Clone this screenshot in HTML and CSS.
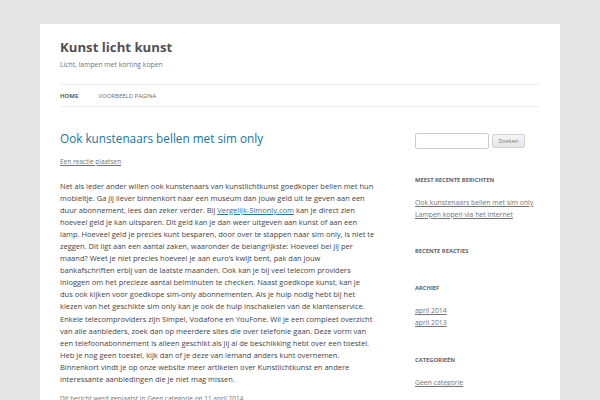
FILE: index.html
```html
<!DOCTYPE html>
<html lang="nl">
<head>
    <meta charset="UTF-8">
    <title>Kunst licht kunst</title>
    <link rel="stylesheet" href="styles.css">
</head>
<body>
    <div id="page" class="site">
        <header class="site-header">
            <h1 class="site-title">Kunst licht kunst</h1>
            <h2 class="site-description">Licht, lampen met korting kopen</h2>
            <nav class="main-navigation">
                <a class="current" href="#">Home</a>
                <a href="#">Voorbeeld pagina</a>
            </nav>
        </header>

        <div class="site-content">
            <main class="content">
                <article class="post">
                    <h1 class="entry-title"><a href="#">Ook kunstenaars bellen met sim only</a></h1>
                    <div class="comments-link"><a href="#">Een reactie plaatsen</a></div>
                    <p class="entry-content">Net als ieder ander willen ook kunstenaars van kunstlichtkunst goedkoper bellen met hun mobieltje. Ga jij liever binnenkort naar een museum dan jouw geld uit te geven aan een duur abonnement, lees dan zeker verder. Bij <a href="#">Vergelijk-Simonly.com</a> kan je direct zien hoeveel geld je kan uitsparen. Dit geld kan je dan weer uitgeven aan kunst of aan een lamp. Hoeveel geld je precies kunt besparen, door over te stappen naar sim only, is niet te zeggen. Dit ligt aan een aantal zaken, waaronder de belangrijkste: Hoeveel bel jij per maand? Weet je niet precies hoeveel je aan euro’s kwijt bent, pak dan jouw bankafschriften erbij van de laatste maanden. Ook kan je bij veel telecom providers inloggen om het precieze aantal belminuten te checken. Naast goedkope kunst, kan je dus ook kijken voor goedkope sim-only abonnementen. Als je hulp nodig hebt bij het kiezen van het geschikte sim only kan je ook de hulp inschakelen van de klantenservice. Enkele telecomproviders zijn Simpel, Vodafone en YouFone. Wil je een compleet overzicht van alle aanbieders, zoek dan op meerdere sites die over telefonie gaan. Deze vorm van een telefoonabonnement is alleen geschikt als jij al de beschikking hebt over een toestel. Heb je nog geen toestel, kijk dan of je deze van iemand anders kunt overnemen.<br>Binnenkort vindt je op onze website meer artikelen over Kunstlichtkunst en andere interessante aanbiedingen die je niet mag missen.</p>
                    <footer class="entry-meta">Dit bericht werd geplaatst in <a href="#">Geen categorie</a> op <a href="#">11 april 2014</a>.</footer>
                </article>
            </main>

            <aside class="sidebar">
                <div class="widget">
                    <form class="searchform">
                        <input type="text" class="search-field">
                        <button type="button" class="search-submit">Zoeken</button>
                    </form>
                </div>
                <div class="widget">
                    <h3 class="widget-title">Meest recente berichten</h3>
                    <ul>
                        <li><a href="#">Ook kunstenaars bellen met sim only</a></li>
                        <li><a href="#">Lampen kopen via het internet</a></li>
                    </ul>
                </div>
                <div class="widget">
                    <h3 class="widget-title">Recente reacties</h3>
                    <ul></ul>
                </div>
                <div class="widget">
                    <h3 class="widget-title">Archief</h3>
                    <ul>
                        <li><a href="#">april 2014</a></li>
                        <li><a href="#">april 2013</a></li>
                    </ul>
                </div>
                <div class="widget">
                    <h3 class="widget-title">Categorieën</h3>
                    <ul>
                        <li><a href="#">Geen categorie</a></li>
                    </ul>
                </div>
            </aside>
        </div>
    </div>
</body>
</html>
```

FILE: styles.css
```css
body {
    margin: 0;
    padding-top: 24px;
    background-color: #e6e6e6;
    font-family: "Open Sans", "Liberation Sans", Arial, sans-serif;
    color: #444;
}

.site {
    width: 480px;
    margin: 0 auto;
    padding: 0 20px;
    background-color: #fff;
}

.site-header {
    padding-top: 14px;
}

.site-title {
    margin: 0;
    font-size: 13.2px;
    line-height: 18px;
    font-weight: bold;
    color: #515151;
}

.site-description {
    margin: 3px 0 0;
    font-size: 6.8px;
    line-height: 12px;
    font-weight: normal;
    color: #757575;
}

.main-navigation {
    display: flex;
    gap: 20px;
    margin-top: 13px;
    border-top: 1px solid #ededed;
    border-bottom: 1px solid #ededed;
    height: 21px;
    align-items: center;
}

.main-navigation a {
    font-size: 6px;
    line-height: 12px;
    text-transform: uppercase;
    text-decoration: none;
    color: #6a6a6a;
}

.main-navigation a.current {
    font-weight: bold;
    color: #5e5e5e;
}

.site-content {
    display: flex;
    justify-content: space-between;
    padding-top: 24px;
}

.content {
    width: 314.5px;
}

.entry-title {
    margin: 0 0 11px;
    font-size: 11.75px;
    line-height: 14px;
    font-weight: normal;
}

.entry-title a {
    color: #21759b;
    text-decoration: none;
}

.comments-link {
    font-size: 6.5px;
    line-height: 12px;
}

.comments-link a,
.entry-meta a {
    color: #757575;
}

.entry-content {
    margin: 11.5px 0 0;
    font-size: 7.5px;
    line-height: 12.1px;
}

.entry-content a {
    color: #21759b;
}

.entry-meta {
    margin-top: 8px;
    font-size: 6.5px;
    line-height: 12px;
    color: #757575;
}

.sidebar {
    width: 125px;
    padding-top: 2px;
}

.widget {
    margin-bottom: 24.5px;
}

.searchform {
    display: flex;
    align-items: center;
    gap: 3px;
}

.search-field {
    box-sizing: border-box;
    width: 74px;
    height: 16px;
    margin: 0;
    padding: 0 3px;
    border: 1px solid #ccc;
    border-radius: 2px;
    background: #fff;
}

.search-submit {
    box-sizing: border-box;
    width: 33px;
    height: 14px;
    margin: 0;
    padding: 0;
    border: 1px solid #d2d2d2;
    border-radius: 2px;
    background: linear-gradient(#f4f4f4, #e6e6e6);
    font-family: inherit;
    font-size: 6px;
    color: #7c7c7c;
}

.widget-title {
    margin: 0 0 11.4px;
    font-size: 5.8px;
    line-height: 12px;
    font-weight: bold;
    text-transform: uppercase;
    color: #636363;
}

.widget ul {
    margin: 0;
    padding: 0;
    list-style: none;
}

.widget li {
    font-size: 6.85px;
    line-height: 12px;
}

.widget li a {
    color: #757575;
}
```
